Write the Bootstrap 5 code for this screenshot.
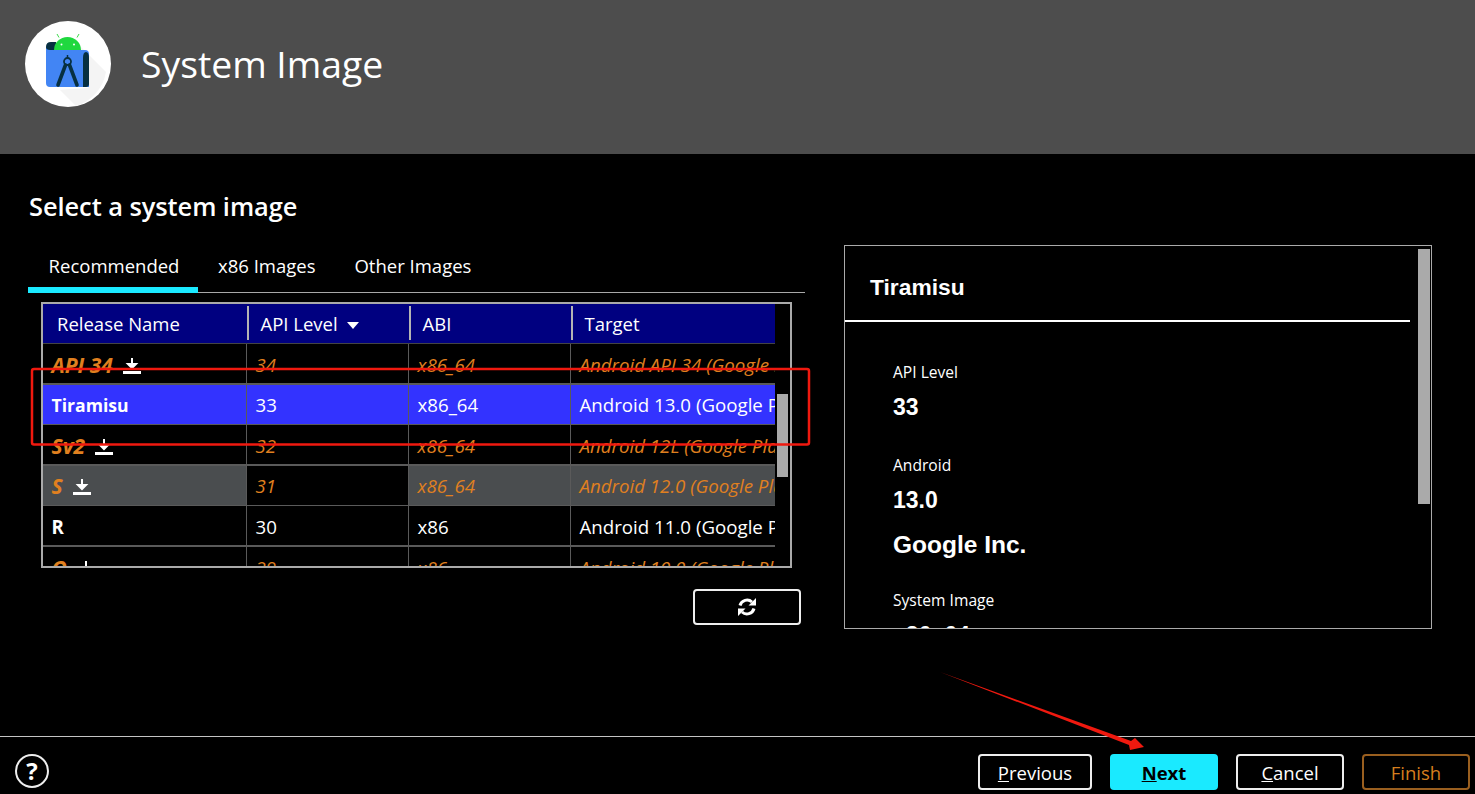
<!DOCTYPE html>
<html lang="en"><head><meta charset="utf-8"><title>System Image</title>
<link rel="stylesheet" href="https://cdn.jsdelivr.net/npm/bootstrap@5.3.0/dist/css/bootstrap.min.css">
<style>
html,body{height:794px;overflow:hidden;background:#000;color:#fff;font-family:"Open Sans","Noto Sans",sans-serif}
.shell{height:794px;position:relative}
.top-band{height:154px;background:#4d4d4d;padding:21px 0 0 25px}
.top-title{font-size:37.3px;font-weight:400;line-height:50px;margin:18px 0 0 30px}
.work{height:582px;padding-left:28px}
.left-col{width:777px}
.sel-title{font-size:25.4px;font-weight:600;line-height:32px;margin:36px 0 0 1px;height:57px;letter-spacing:-.05px}
.tabbar{height:46px;border-bottom:1px solid #a8a8a8;flex-wrap:nowrap}
.tabbar .nav-link{color:#fff;font-size:18.5px;padding:0;line-height:38px;height:46px;border-bottom:6px solid transparent;text-align:center}
.tabbar .nav-link.active{border-bottom-color:#1aeaff;width:170px;padding-left:2px}
.tab-b{margin-left:20px}
.tab-c{margin-left:39px}
.frame{width:751px;height:266px;margin:9px 0 0 13px;border:2px solid #aaa;overflow:hidden}
.grid-box{width:732px;overflow:hidden;flex:none}
.rel-table{width:732px;table-layout:fixed;border-collapse:collapse;font-size:18.7px;color:#fff;margin:0}
.rel-table th{background:#000080;font-weight:400;height:39px;padding:2px 0 0 14.5px;position:relative;border-bottom:1px solid #444;font-size:18.5px}
.rel-table th+th::before{content:"";position:absolute;left:1px;top:2px;bottom:3px;width:2px;background:#b4b4b4}
.rel-table th:first-child{padding-left:14px}
.rel-table td{height:40.4px;padding:4px 0 0 9px;white-space:nowrap;overflow:hidden;border:1px solid #5a5a5a;line-height:24px}
.rel-table td:first-child{padding-left:8.500px}
.rel-table tr td:first-child{border-left:0}
.rel-table tr td:last-child{border-right:0}
.rel-table tbody tr:first-child td{height:41px}
.nm{font-weight:700}
.off td{color:#e0801f;font-style:italic}
.off .nm{font-size:21px}
.pick .nm{font-size:17.6px}
.pick td{background:#3333ff;border-top:2px solid #5a5a5a;padding-top:2px}
.hov td{background:#4a4d4f;border-top:2px solid #5a5a5a;padding-top:2px}
.hov td:nth-child(2){background:#000}
.plain td{border-bottom:2px solid #5a5a5a}
.dl{margin-left:10px;vertical-align:-2px}
.caret-dn{display:inline-block;width:0;height:0;border-left:6.500px solid transparent;border-right:6.500px solid transparent;border-top:7px solid #fff;margin-left:9px;vertical-align:2px}
.rail{width:15px;background:#000}
.thumb{width:11px;height:83px;background:#aaa;margin:90px 0 0 2px}
.reload{width:108px;height:36px;margin:21px 4px 0 auto;background:#000;border:2px solid #eee;border-radius:4px;padding:0;display:flex;align-items:center;justify-content:center}
.info{width:588px;height:384px;margin:91px 0 0 39px;border:1px solid #aaa;overflow:hidden;font-family:"Liberation Sans",Arial,sans-serif}
.info-main{width:565px;flex:none}
.info-head{height:76px;border-bottom:2px solid #fff;font-size:22.8px;font-weight:700;padding:27px 0 0 25px;line-height:28px}
.info-body{padding:40px 0 0 48px}
.lbl{font-family:"Open Sans",sans-serif;font-size:15.6px;line-height:20px;margin:0}
.val{font-size:23px;font-weight:700;line-height:28px;margin:11px 0 0}
.gap-a{margin-top:34px}
.val2{margin-top:17px;font-size:24.500px}
.gap-b{margin-top:31px}
.info-rail{width:12px;height:255px;background:#aaa;margin:3px 0 0 8px;flex:none}
.foot{height:58px;border-top:1px solid #c4c4c4;padding:17px 5px 0 15px}
.help{width:34px;height:34px;border:2px solid #eee;border-radius:50%;background:#000;color:#fff;padding:0;font-size:24px;font-weight:700;line-height:28px;font-family:"Open Sans",sans-serif}
.act{width:108px;height:36px;border:2px solid #eee;border-radius:4px;background:#000;color:#fff;font-size:18.5px;line-height:34px;padding:0}
.act:hover{background:#000;color:#fff}
.act-wide{width:114px}
.act-main{background:#1aeaff;border-color:#1aeaff;color:#000;font-weight:700}
.act-main:hover{background:#1aeaff;color:#000}
.act-off{border-color:#9a5f1f;color:#d67f1e}
.act-off:hover{color:#d67f1e}
.g1{margin-left:18px}.g2{margin-left:18px}
.note{position:absolute;left:0;top:0;width:1475px;height:794px;pointer-events:none}
</style></head><body>
<div class="shell">
<header class="top-band d-flex align-items-start">
<svg width="86" height="86" viewBox="25 21 86 86" aria-hidden="true">
<circle cx="68" cy="64" r="43" fill="#fff"/>
<path d="M80 46L106 72A43 43 0 0 1 76 106L60 90L88 88Z" fill="#f4f4f4"/>
<path d="M59 37.500L57 34M77 37.500L79 34" stroke="#3ddc4c" stroke-width="1"/>
<path d="M46 47q0-5 5-5h5v10h-10z" fill="#073042"/>
<path d="M54 50A13.500 13 0 0 1 81 50z" fill="#1fd83f"/>
<circle cx="61.500" cy="44.500" r="1" fill="#fff"/><circle cx="74" cy="44.500" r="1" fill="#fff"/>
<path d="M46 47q0 3 4 3h35q4 0 4 4v33H50q-4 0-4-4z" fill="#4285f4"/>
<path d="M83 58q0-6 3-6t3 6v26q0 3-3 3h-3z" fill="#073042"/>
<circle cx="67.500" cy="61.500" r="3.500" fill="none" stroke="#073042" stroke-width="1.800"/>
<path d="M67.500 55v3" stroke="#073042" stroke-width="1.500"/>
<path d="M65.500 65L58 85M69.500 65L77 85" stroke="#073042" stroke-width="3.600" stroke-linecap="round" fill="none"/>
</svg>
<h1 class="top-title">System Image</h1>
</header>
<main class="work d-flex align-items-start">
<section class="left-col">
<h2 class="sel-title">Select a system image</h2>
<ul class="nav tabbar">
<li class="nav-item"><a class="nav-link active" href="#">Recommended</a></li>
<li class="nav-item tab-b"><a class="nav-link" href="#">x86 Images</a></li>
<li class="nav-item tab-c"><a class="nav-link" href="#">Other Images</a></li>
</ul>
<div class="frame d-flex">
<div class="grid-box">
<table class="rel-table">
<colgroup><col style="width:203px"><col style="width:162px"><col style="width:162px"><col style="width:205px"></colgroup>
<thead><tr><th>Release Name</th><th>API Level<span class="caret-dn"></span></th><th>ABI</th><th>Target</th></tr></thead>
<tbody>
<tr class="off"><td class="nm">API 34<svg class="dl" width="18" height="18" viewBox="0 0 18 18"><path d="M9 1v9M5 7l4 4 4-4z" stroke="#fff" stroke-width="2" fill="#fff"/><rect y="14" width="18" height="3" fill="#fff"/></svg></td><td>34</td><td>x86_64</td><td>Android API 34 (Google Play)</td></tr>
<tr class="pick"><td class="nm">Tiramisu</td><td>33</td><td>x86_64</td><td>Android 13.0 (Google Play)</td></tr>
<tr class="off"><td class="nm">Sv2<svg class="dl" width="18" height="18" viewBox="0 0 18 18"><path d="M9 1v9M5 7l4 4 4-4z" stroke="#fff" stroke-width="2" fill="#fff"/><rect y="14" width="18" height="3" fill="#fff"/></svg></td><td>32</td><td>x86_64</td><td>Android 12L (Google Play)</td></tr>
<tr class="off hov"><td class="nm">S<svg class="dl" width="18" height="18" viewBox="0 0 18 18"><path d="M9 1v9M5 7l4 4 4-4z" stroke="#fff" stroke-width="2" fill="#fff"/><rect y="14" width="18" height="3" fill="#fff"/></svg></td><td>31</td><td>x86_64</td><td>Android 12.0 (Google Play)</td></tr>
<tr class="plain"><td class="nm">R</td><td>30</td><td>x86</td><td>Android 11.0 (Google Play)</td></tr>
<tr class="off"><td class="nm">Q<svg class="dl" width="18" height="18" viewBox="0 0 18 18"><path d="M9 1v9M5 7l4 4 4-4z" stroke="#fff" stroke-width="2" fill="#fff"/><rect y="14" width="18" height="3" fill="#fff"/></svg></td><td>29</td><td>x86</td><td>Android 10.0 (Google Play)</td></tr>
</tbody></table>
</div>
<div class="rail"><div class="thumb"></div></div>
</div>
<button class="reload btn" type="button" aria-label="Refresh"><svg width="18" height="18" viewBox="0 0 18 18"><path d="M2 7.500A7.300 7.300 0 0 1 14 4M16 10.500A7.300 7.300 0 0 1 4 14" stroke="#fff" stroke-width="3" fill="none"/><path d="M18 0v7.500h-7.500zM0 18v-7.500h7.500z" fill="#fff"/></svg></button>
</section>
<aside class="info d-flex">
<div class="info-main">
<div class="info-head">Tiramisu</div>
<div class="info-body">
<p class="lbl">API Level</p><p class="val">33</p>
<p class="lbl gap-a">Android</p><p class="val">13.0</p><p class="val val2">Google Inc.</p>
<p class="lbl gap-b">System Image</p><p class="val">x86_64</p>
</div></div>
<div class="info-rail"></div>
</aside>
</main>
<footer class="foot d-flex align-items-start">
<button class="help" type="button">?</button>
<div class="ms-auto d-flex">
<button class="act act-wide btn" type="button"><u>P</u>revious</button>
<button class="act act-main g1 btn" type="button"><u>N</u>ext</button>
<button class="act g2 btn" type="button"><u>C</u>ancel</button>
<button class="act act-off g2 btn" type="button">Finish</button>
</div>
</footer>
<svg class="note" viewBox="0 0 1475 794" aria-hidden="true">
<rect x="32" y="369" width="777" height="75.500" rx="2" fill="none" stroke="#f0190f" stroke-width="2.500"/>
<path d="M940 672L1131 741L1135 738L1144 747L1130 750L1129 745Z" fill="#f0190f"/>
</svg>
</div>
</body></html>
